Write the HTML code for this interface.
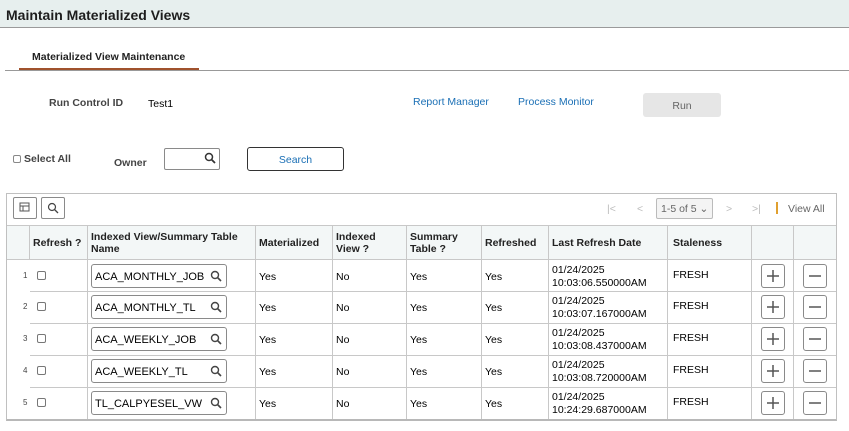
<!DOCTYPE html><html><head><style>
*{margin:0;padding:0;box-sizing:border-box}
body{width:849px;height:431px;overflow:hidden;background:#fff;font-family:"Liberation Sans",Arial,sans-serif;font-size:10.5px;color:#000;position:relative}
.a{position:absolute}
.hb{font-weight:bold;color:#222}
.lnk{color:#1a6fb5}
.v{position:absolute;width:1px;background:#c8c8c8}
.h{position:absolute;height:1px;background:#c8c8c8}
.inp{position:absolute;left:91px;width:136px;height:24px;border:1px solid #8a8a8a;border-radius:3px;font-size:11px;padding:6px 0 0 3px;background:#fff}
.btn{position:absolute;width:24px;height:24px;border:1px solid #8a8a8a;border-radius:3px;background:#fff}
.cb{position:absolute;left:37px;width:9px;height:9px;border:1px solid #777;border-radius:2px;background:#fff}
</style></head><body>
<div class="a" style="left:0;top:0;width:849px;height:28px;background:#e7efee;border-bottom:1px solid #9a9a9a"></div>
<div class="a hb" style="left:6px;top:7px;font-size:14px;color:#1d1d1d">Maintain Materialized Views</div>
<div class="a hb" style="left:32px;top:51px;font-size:10.5px">Materialized View Maintenance</div>
<div class="a" style="left:5px;top:70px;width:844px;height:1px;background:#999"></div>
<div class="a" style="left:19px;top:68px;width:180px;height:2px;background:#a0522d"></div>
<div class="a hb" style="left:49px;top:97px;color:#444">Run Control ID</div>
<div class="a" style="left:148px;top:98px">Test1</div>
<div class="a lnk" style="left:413px;top:96px">Report Manager</div>
<div class="a lnk" style="left:518px;top:96px">Process Monitor</div>
<div class="a" style="left:643px;top:93px;width:78px;height:24px;background:#e6e6e6;border-radius:3px;color:#666;text-align:center;line-height:26px">Run</div>
<div class="a" style="left:13px;top:155px;width:8px;height:8px;border:1px solid #888;border-radius:2px"></div>
<div class="a hb" style="left:24px;top:153px;color:#444">Select All</div>
<div class="a hb" style="left:114px;top:157px;color:#444">Owner</div>
<div class="a" style="left:164px;top:148px;width:56px;height:22px;border:1px solid #8a8a8a;border-radius:2px"></div>
<svg class="a" style="left:204px;top:152px" width="12" height="12"><circle cx="5" cy="5" r="3.5" fill="none" stroke="#333" stroke-width="1.5"/><line x1="7.5" y1="7.5" x2="11" y2="11" stroke="#333" stroke-width="1.8"/></svg>
<div class="a lnk" style="left:247px;top:147px;width:97px;height:24px;border:1px solid #333;border-radius:3px;text-align:center;line-height:24px">Search</div>

<div class="a" style="left:6px;top:193px;width:831px;height:228px;border:1px solid #c0c0c0;border-bottom:2px solid #b8b8b8"></div>
<div class="a" style="left:13px;top:197px;width:24px;height:22px;border:1px solid #8a8a8a;border-radius:2px"></div>
<svg class="a" style="left:19px;top:202px" width="12" height="12"><rect x="1" y="1" width="9" height="8" fill="none" stroke="#555"/><line x1="1" y1="4" x2="10" y2="4" stroke="#555"/><line x1="4" y1="4" x2="4" y2="9" stroke="#555"/></svg>
<div class="a" style="left:41px;top:197px;width:24px;height:22px;border:1px solid #8a8a8a;border-radius:2px"></div>
<svg class="a" style="left:47px;top:202px" width="12" height="12"><circle cx="5" cy="5" r="3.5" fill="none" stroke="#444" stroke-width="1.2"/><line x1="7.5" y1="7.5" x2="11" y2="11" stroke="#444" stroke-width="1.3"/></svg>
<div class="a" style="left:607px;top:203px;color:#bbb">|&lt;</div>
<div class="a" style="left:637px;top:203px;color:#bbb">&lt;</div>
<div class="a" style="left:656px;top:198px;width:57px;height:21px;border:1px solid #bbb;border-radius:2px;background:#f4f4f4;color:#666;padding:4px 0 0 4px">1-5 of 5 ⌄</div>
<div class="a" style="left:726px;top:203px;color:#bbb">&gt;</div>
<div class="a" style="left:752px;top:203px;color:#bbb">&gt;|</div>
<div class="a" style="left:776px;top:202px;width:2px;height:12px;background:#e0a030"></div>
<div class="a" style="left:788px;top:203px;color:#666">View All</div>

<div class="a" style="left:7px;top:225px;width:829px;height:35px;background:#f3f7f7;border-top:1px solid #c8c8c8;border-bottom:1px solid #c8c8c8"></div>
<div class="v" style="left:29px;top:225px;height:35px"></div>
<div class="v" style="left:87px;top:225px;height:194px"></div>
<div class="v" style="left:255px;top:225px;height:194px"></div>
<div class="v" style="left:332px;top:225px;height:194px"></div>
<div class="v" style="left:406px;top:225px;height:194px"></div>
<div class="v" style="left:481px;top:225px;height:194px"></div>
<div class="v" style="left:548px;top:225px;height:194px"></div>
<div class="v" style="left:667px;top:225px;height:194px"></div>
<div class="v" style="left:751px;top:225px;height:194px"></div>
<div class="v" style="left:793px;top:225px;height:194px"></div>
<div class="h" style="left:30px;top:291px;width:806px"></div>
<div class="h" style="left:30px;top:323px;width:806px"></div>
<div class="h" style="left:30px;top:355px;width:806px"></div>
<div class="h" style="left:30px;top:387px;width:806px"></div>

<div class="a hb" style="left:33px;top:237px">Refresh ?</div>
<div class="a hb" style="left:91px;top:231px;line-height:12px">Indexed View/Summary Table<br>Name</div>
<div class="a hb" style="left:259px;top:237px">Materialized</div>
<div class="a hb" style="left:336px;top:231px;line-height:12px">Indexed<br>View ?</div>
<div class="a hb" style="left:410px;top:231px;line-height:12px">Summary<br>Table ?</div>
<div class="a hb" style="left:485px;top:237px">Refreshed</div>
<div class="a hb" style="left:552px;top:237px">Last Refresh Date</div>
<div class="a hb" style="left:673px;top:237px">Staleness</div>

<div id="rows"></div>
<script>
var d=[["ACA_MONTHLY_JOB","10:03:06.550000AM"],["ACA_MONTHLY_TL","10:03:07.167000AM"],["ACA_WEEKLY_JOB","10:03:08.437000AM"],["ACA_WEEKLY_TL","10:03:08.720000AM"],["TL_CALPYESEL_VW","10:24:29.687000AM"]];
var tops=[260,291,323,355,387],h="";
d.forEach(function(r,i){var t=tops[i],c=t+16;
h+='<div class="a" style="left:23px;top:'+(c-5)+'px;font-size:8px;color:#444">'+(i+1)+'</div>';
h+='<div class="cb" style="top:'+(c-5)+'px"></div>';
h+='<div class="inp" style="top:'+(c-12)+'px">'+r[0]+'</div>';
h+='<svg class="a" style="left:210px;top:'+(c-6)+'px" width="12" height="12"><circle cx="5" cy="5" r="3.5" fill="none" stroke="#444" stroke-width="1.4"/><line x1="7.5" y1="7.5" x2="11" y2="11" stroke="#444" stroke-width="1.6"/></svg>';
h+='<div class="a" style="left:259px;top:'+(c-5)+'px">Yes</div><div class="a" style="left:336px;top:'+(c-5)+'px">No</div><div class="a" style="left:410px;top:'+(c-5)+'px">Yes</div><div class="a" style="left:485px;top:'+(c-5)+'px">Yes</div>';
h+='<div class="a" style="left:552px;top:'+(c-12)+'px;line-height:13px">01/24/2025<br>'+r[1]+'</div>';
h+='<div class="a" style="left:673px;top:'+(c-7)+'px">FRESH</div>';
h+='<div class="btn" style="left:761px;top:'+(c-12)+'px"></div><svg class="a" style="left:761px;top:'+(c-12)+'px" width="24" height="24"><line x1="6" y1="12" x2="18" y2="12" stroke="#555" stroke-width="1.5"/><line x1="12" y1="6" x2="12" y2="18" stroke="#555" stroke-width="1.5"/></svg>';
h+='<div class="btn" style="left:803px;top:'+(c-12)+'px"></div><svg class="a" style="left:803px;top:'+(c-12)+'px" width="24" height="24"><line x1="6" y1="12" x2="18" y2="12" stroke="#555" stroke-width="1.5"/></svg>';
});
document.getElementById("rows").innerHTML=h;
</script>
</body></html>
